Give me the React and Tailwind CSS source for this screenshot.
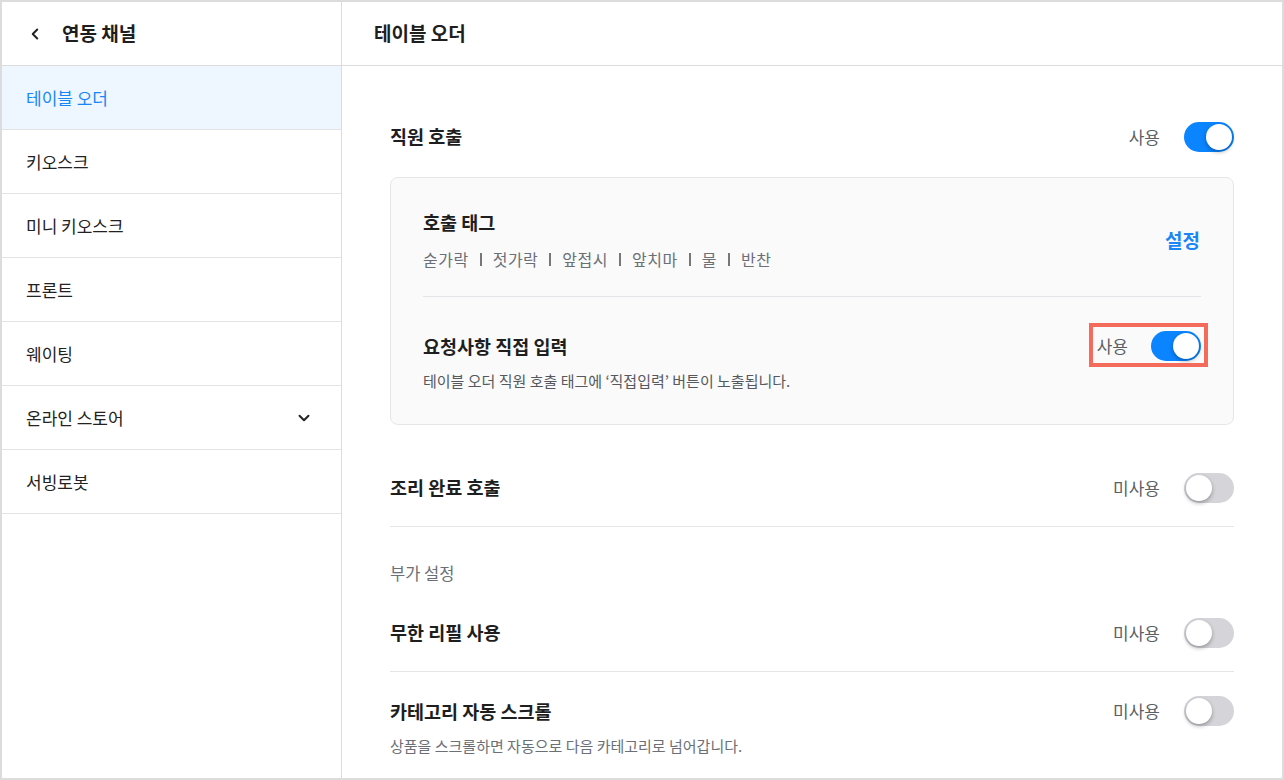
import { FiChevronLeft, FiChevronDown } from 'react-icons/fi';

const FONT = { fontFamily: '"Noto Sans CJK KR", "Noto Sans", sans-serif' };

const MENU = ['테이블 오더', '키오스크', '미니 키오스크', '프론트', '웨이팅', '온라인 스토어', '서빙로봇'];
const TAGS = ['숟가락', '젓가락', '앞접시', '앞치마', '물', '반찬'];

const Toggle = ({ on }) => (
  <div
    className={`relative w-[50px] h-[30px] rounded-full shrink-0 ${on ? 'bg-[#0a84ff]' : 'bg-[#d4d4d9]'}`}
  >
    <div
      className={`absolute top-[2px] w-[26px] h-[26px] rounded-full bg-white shadow-[0_2px_4px_rgba(0,0,0,0.3)] ${
        on ? 'right-[2px]' : 'left-[2px]'
      }`}
    />
  </div>
);

const Switch = ({ on }) => (
  <div className="flex items-center gap-6">
    <span className="text-[17px] text-[#5b5f66]">{on ? '사용' : '미사용'}</span>
    <Toggle on={on} />
  </div>
);

export default function App() {
  return (
    <div style={FONT} className="w-[1284px] h-[780px] border-2 border-[#dcdcdc] bg-white flex text-[#1e1e1e] overflow-hidden">
      {/* Sidebar */}
      <aside className="w-[340px] shrink-0 border-r border-[#dcdcdc] flex flex-col">
        <div className="h-16 border-b border-[#dcdcdc] flex items-center pl-[24px]">
          <FiChevronLeft className="w-[18px] h-[18px] text-[#222]" strokeWidth={2.6} />
          <span className="ml-[18px] text-[19px] font-bold">연동 채널</span>
        </div>
        {MENU.map((m, i) => (
          <div
            key={m}
            className={`h-16 border-b border-[#e3e3e3] flex items-center justify-between pl-[24px] pr-[28px] text-[17px] ${
              i === 0 ? 'bg-[#eef6ff] text-[#1a86f5]' : 'text-[#222]'
            }`}
          >
            <span>{m}</span>
            {m === '온라인 스토어' && <FiChevronDown className="w-[18px] h-[18px]" strokeWidth={2.6} />}
          </div>
        ))}
      </aside>

      {/* Main */}
      <main className="flex-1 flex flex-col">
        <div className="h-16 shrink-0 border-b border-[#dcdcdc] flex items-center pl-[32px]">
          <span className="text-[19px] font-bold">테이블 오더</span>
        </div>

        <div className="px-12 pt-[40px]">
          {/* 직원 호출 */}
          <div className="h-[62px] flex items-center justify-between">
            <span className="text-[18.5px] font-semibold">직원 호출</span>
            <Switch on />
          </div>

          <div className="mt-[9px] rounded-lg border border-[#e6e6e9] bg-[#fafafa] px-8 pt-[31px] pb-[33px]">
            <div className="flex items-center justify-between pb-[25px] border-b border-[#e3e3e8]">
              <div>
                <div className="text-[18.5px] font-semibold leading-[26px]">호출 태그</div>
                <div className="mt-3 flex items-center text-[16px] leading-6 tracking-[0.5px] text-[#6b6f76]">
                  {TAGS.map((t, i) => (
                    <span key={t} className="flex items-center">
                      {i > 0 && <span className="mx-[11px] w-[2px] h-[13px] bg-[#777]" />}
                      {t}
                    </span>
                  ))}
                </div>
              </div>
              <span className="text-[19px] font-semibold text-[#1a86f5] mr-[1px]">설정</span>
            </div>

            <div className="pt-[36px]">
              <div className="h-[26px] flex items-center justify-between">
                <span className="text-[18.5px] font-semibold leading-[26px]">요청사항 직접 입력</span>
                <div className="relative">
                  <div className="flex items-center gap-[23px]">
                    <span className="text-[17px] text-[#5b5f66]">사용</span>
                    <Toggle on />
                  </div>
                  <div className="absolute -left-[8px] -right-[7px] -top-[8px] -bottom-[6px] border-4 border-[#f46b5b]" />
                </div>
              </div>
              <div className="mt-3 text-[15px] leading-5 text-[#55595f]">
                테이블 오더 직원 호출 태그에 ‘직접입력’ 버튼이 노출됩니다.
              </div>
            </div>
          </div>

          {/* 조리 완료 호출 */}
          <div className="mt-[24px] h-[78px] border-b border-[#e6e6e6] flex items-center justify-between">
            <span className="text-[18.5px] font-semibold">조리 완료 호출</span>
            <Switch on={false} />
          </div>

          <div className="pt-[36px] text-[16.5px] leading-5 text-[#6b6f76]">부가 설정</div>

          <div className="mt-[11px] h-[78px] border-b border-[#e6e6e6] flex items-center justify-between">
            <span className="text-[18.5px] font-semibold">무한 리필 사용</span>
            <Switch on={false} />
          </div>

          <div className="pt-[26px]">
            <div className="h-[26px] flex items-center justify-between">
              <span className="text-[18.5px] font-semibold leading-[26px]">카테고리 자동 스크롤</span>
              <Switch on={false} />
            </div>
            <div className="mt-3 text-[15px] leading-5 text-[#6b6f76]">
              상품을 스크롤하면 자동으로 다음 카테고리로 넘어갑니다.
            </div>
          </div>
        </div>
      </main>
    </div>
  );
}
